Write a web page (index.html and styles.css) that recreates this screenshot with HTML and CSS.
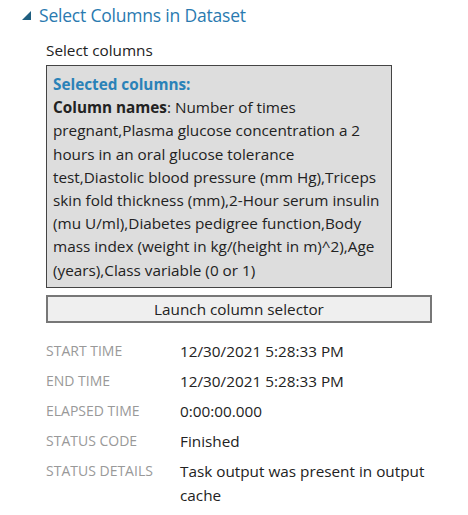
FILE: index.html
```html
<!DOCTYPE html>
<html>
<head>
<meta charset="utf-8">
<link rel="stylesheet" href="styles.css">
</head>
<body>
<div class="panel">
  <div class="header">
    <svg class="caret" width="9" height="9" viewBox="0 0 9 9"><polygon points="0,9 9,9 9,0" fill="#1f5f80"/></svg>
    <span class="title">Select Columns in Dataset</span>
  </div>
  <div class="content">
    <div class="field-label">Select columns</div>
    <div class="selection">
      <div class="sel-head">Selected columns:</div>
      <div class="sel-body"><b>Column names</b>: Number of times pregnant,Plasma glucose concentration a 2 hours in an oral glucose tolerance test,Diastolic blood pressure (mm Hg),Triceps skin fold thickness (mm),2-Hour serum insulin (mu U/ml),Diabetes pedigree function,Body mass index (weight in kg/(height in m)^2),Age (years),Class variable (0 or 1)</div>
    </div>
    <button class="launch">Launch column selector</button>
    <div class="props">
      <div class="prop"><div class="key">START TIME</div><div class="val">12/30/2021 5:28:33 PM</div></div>
      <div class="prop"><div class="key">END TIME</div><div class="val">12/30/2021 5:28:33 PM</div></div>
      <div class="prop"><div class="key">ELAPSED TIME</div><div class="val">0:00:00.000</div></div>
      <div class="prop"><div class="key">STATUS CODE</div><div class="val">Finished</div></div>
      <div class="prop"><div class="key">STATUS DETAILS</div><div class="val">Task output was present in output cache</div></div>
    </div>
  </div>
</div>
</body>
</html>
```
FILE: styles.css
```css
html, body {
  margin: 0;
  padding: 0;
  background: #fff;
}
body {
  font-family: "Open Sans", "Noto Sans", sans-serif;
  color: #222;
  width: 468px;
  height: 515px;
  overflow: hidden;
}
.header {
  display: flex;
  align-items: center;
  padding: 3px 0 0 22px;
  height: 24px;
  gap: 8px;
}
.caret {
  display: block;
  margin-top: 1px;
}
.title {
  font-size: 17.5px;
  color: #2a7ab0;
  letter-spacing: -0.2px;
}
.content {
  padding-left: 46px;
  width: 386px;
}
.field-label {
  margin-top: 13px;
  font-size: 15.3px;
  line-height: 20px;
  color: #222;
}
.selection {
  margin-top: 5px;
  width: 333px;
  background: #dddddd;
  border: 1px solid #444;
  padding: 7px 5px 5px 6px;
  font-size: 15.3px;
  line-height: 23.2px;
}
.sel-head {
  color: #2a82b8;
  font-weight: bold;
}
.sel-body b {
  font-weight: bold;
}
.launch {
  display: block;
  margin-top: 7px;
  width: 386px;
  height: 28px;
  background: #efefef;
  border: 2px solid #777;
  font-family: inherit;
  font-size: 15.3px;
  color: #222;
  padding: 0;
}
.props {
  margin-top: 16px;
}
.prop {
  display: flex;
  margin-bottom: 6px;
}
.key {
  width: 134px;
  flex-shrink: 0;
  color: #999;
  font-size: 14px;
  line-height: 24px;
}
.val {
  flex: 1;
  font-size: 15.3px;
  line-height: 24px;
  color: #222;
}
```
